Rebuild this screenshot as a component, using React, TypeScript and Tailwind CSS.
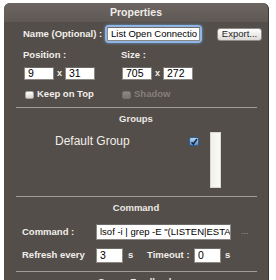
import React from "react";

const font = { fontFamily: '"Liberation Sans", Arial, sans-serif' };

function Field({ w, h = 14, small, children }: { w: number; h?: number; small?: boolean; children?: React.ReactNode }) {
  return (
    <div
      className={
        "flex items-center overflow-hidden whitespace-nowrap border border-[#8c8884] border-t-[#6e6a66] bg-white pl-[3px] font-normal text-black " +
        (small ? "text-[9.5px]" : "text-[10.5px]")
      }
      style={{ width: w, height: h }}
    >
      {children}
    </div>
  );
}

function Check({ disabled }: { disabled?: boolean }) {
  return (
    <span
      className={
        "inline-block h-[8px] w-[9px] rounded-[2px] border " +
        (disabled
          ? "border-[#77716d] bg-gradient-to-b from-[#8e8884] to-[#7a7470]"
          : "border-[#a9a5a1] bg-gradient-to-b from-white to-[#d8d6d3]")
      }
    />
  );
}

function Separator() {
  return <div className="ml-[12px] h-px w-[241px] bg-[#a19c98]" />;
}

function Title({ children }: { children: React.ReactNode }) {
  return (
    <div className="flex h-[12px] items-center justify-center text-[9.5px] font-bold leading-none text-[#ece8e4]">
      {children}
    </div>
  );
}

export default function App() {
  return (
    <div className="h-[280px] w-[276px] overflow-hidden bg-white pt-[3px]" style={font}>
      <div className="ml-[4px] h-[300px] w-[265px] rounded-t-[6px] border-r border-[#3f3a37] bg-[#534e4a]">
        {/* header */}
        <div className="flex h-[19px] items-center justify-center rounded-t-[6px] bg-gradient-to-b from-[#6c6561] to-[#5f5955] text-[10.5px] font-bold text-[#efebe7]">
          Properties
        </div>

        {/* name row */}
        <div className="mt-[5px] flex h-[14px] items-center pl-[19px]">
          <div className="w-[84px] text-[9.5px] font-bold text-[#f2eeea]">Name (Optional) :</div>
          <div className="rounded-[2px] shadow-[0_0_0_2px_#8fb6e6,0_0_3px_2px_#6d9fd8]">
            <Field w={93} small>List Open Connectio</Field>
          </div>
          <button className="ml-[17px] flex h-[13px] w-[45px] items-center justify-center rounded-[3px] border border-[#8e8a86] bg-gradient-to-b from-white to-[#dcdad7] text-[9.5px] text-[#1e1e1e]">
            Export...
          </button>
        </div>

        {/* position / size labels */}
        <div className="mt-[8px] flex h-[12px] items-center pl-[19px] text-[9.5px] font-bold text-[#f2eeea]">
          <div className="w-[98px]">Position :</div>
          <div>Size :</div>
        </div>

        {/* position / size fields */}
        <div className="mt-[6px] flex h-[13px] items-center pl-[20px]">
          <Field w={30} h={13}>9</Field>
          <span className="w-[11px] text-center text-[9px] font-bold text-[#f2eeea]">x</span>
          <Field w={30} h={13}>31</Field>
          <div className="w-[27px]" />
          <Field w={30} h={13}>705</Field>
          <span className="w-[11px] text-center text-[9px] font-bold text-[#f2eeea]">x</span>
          <Field w={30} h={13}>272</Field>
        </div>

        {/* checkboxes */}
        <div className="mt-[9px] flex h-[11px] items-center pl-[21px] text-[9.5px] font-bold">
          <Check />
          <span className="ml-[3px] w-[85px] text-[#f2eeea]">Keep on Top</span>
          <Check disabled />
          <span className="ml-[3px] text-[#857f7b]">Shadow</span>
        </div>

        <div className="mt-[7px]">
          <Separator />
        </div>

        <div className="mt-[5px]">
          <Title>Groups</Title>
        </div>

        {/* groups list */}
        <div className="mt-[7px] flex h-[56px] items-start">
          <div className="ml-[51px] mt-[3px] w-[134px] text-[12px] leading-[13px] text-[#f1ede9]">Default Group</div>
          <span className="mt-[5px] flex h-[9px] w-[10px] items-center justify-center rounded-[2px] border border-[#2f5f95] bg-gradient-to-b from-[#b9d5f2] to-[#5b8fcb]">
            <svg width="8" height="8" viewBox="0 0 8 8">
              <path d="M1.5 4.2 L3.3 6 L7 1" stroke="#10243f" strokeWidth="1.5" fill="none" />
            </svg>
          </span>
          <div className="ml-[11px] h-[56px] w-[11px] border border-[#d9d7d0] bg-gradient-to-r from-[#f1f1e6] to-[#fbfbf6]" />
        </div>

        <div className="mt-[8px]">
          <Separator />
        </div>

        <div className="mt-[5px]">
          <Title>Command</Title>
        </div>

        {/* command row */}
        <div className="mt-[10px] flex h-[16px] items-center pl-[18px]">
          <div className="w-[74px] text-[9.5px] font-bold text-[#f2eeea]">Command :</div>
          <Field w={135} h={16} small>lsof -i | grep -E "(LISTEN|ESTA</Field>
          <span className="ml-[10px] text-[9px] text-[#a29c98]">...</span>
        </div>

        {/* refresh row */}
        <div className="mt-[8px] flex h-[15px] items-center pl-[18px] text-[9.5px] font-bold text-[#f2eeea]">
          <div className="w-[74px]">Refresh every</div>
          <Field w={27} h={15}>3</Field>
          <span className="ml-[5px] w-[19px]">s</span>
          <span className="w-[47px]">Timeout :</span>
          <Field w={27} h={15}>0</Field>
          <span className="ml-[4px]">s</span>
        </div>

        <div className="mt-[8px]">
          <Separator />
        </div>

        <div className="mt-[4px]">
          <Title>Server Feedback</Title>
        </div>
      </div>
    </div>
  );
}
